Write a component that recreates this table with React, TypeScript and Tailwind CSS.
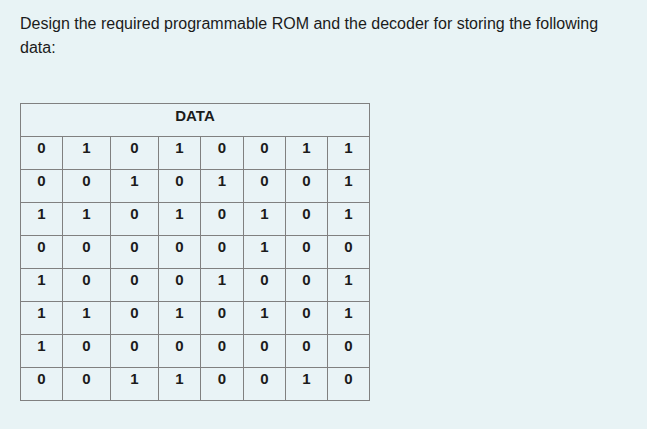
import React from "react";

const rows = [
  [0, 1, 0, 1, 0, 0, 1, 1],
  [0, 0, 1, 0, 1, 0, 0, 1],
  [1, 1, 0, 1, 0, 1, 0, 1],
  [0, 0, 0, 0, 0, 1, 0, 0],
  [1, 0, 0, 0, 1, 0, 0, 1],
  [1, 1, 0, 1, 0, 1, 0, 1],
  [1, 0, 0, 0, 0, 0, 0, 0],
  [0, 0, 1, 1, 0, 0, 1, 0],
];

const widths = [42, 48, 48, 42, 43, 42, 42, 42];

export default function App() {
  return (
    <div
      className="w-[647px] h-[429px] bg-[#e8f3f5] text-[#1b1b1b] px-[20px] pt-[12px]"
      style={{ fontFamily: '"Liberation Sans", Arial, sans-serif' }}
    >
      <p className="text-[16px] leading-[24px] w-[600px]">
        Design the required programmable ROM and the decoder for storing the following data:
      </p>
      <table className="mt-[43px] border-collapse bg-[#e9f3f6]">
        <colgroup>
          {widths.map((w, i) => (
            <col key={i} style={{ width: w }} />
          ))}
        </colgroup>
        <thead>
          <tr>
            <th
              colSpan={8}
              className="h-[33px] border border-[#808080] text-[15px] font-bold align-top pt-[3px] leading-[18px]"
            >
              DATA
            </th>
          </tr>
        </thead>
        <tbody>
          {rows.map((r, i) => (
            <tr key={i}>
              {r.map((v, j) => (
                <td
                  key={j}
                  className="h-[33px] border border-[#808080] text-center text-[15px] font-bold align-top pt-[2px] leading-[18px] p-0"
                >
                  {v}
                </td>
              ))}
            </tr>
          ))}
        </tbody>
      </table>
    </div>
  );
}
